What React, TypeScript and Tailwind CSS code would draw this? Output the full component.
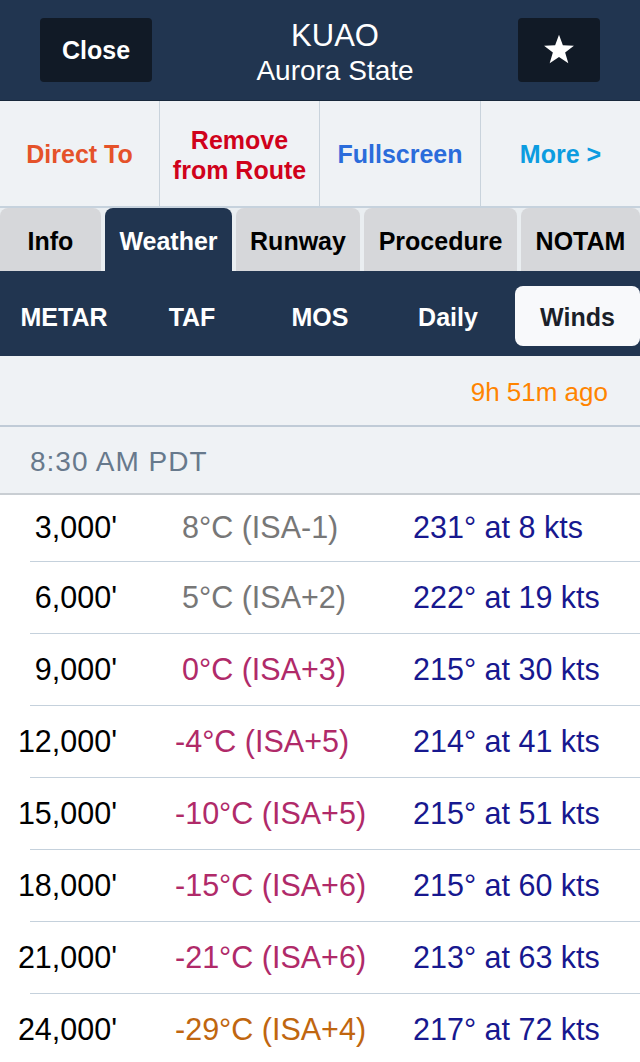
import React from "react";

type WindRow = {
  alt: string;
  temp: string;
  tone: "gray" | "magenta" | "orange";
  wind: string;
};

const rows: WindRow[] = [
  { alt: "3,000'", temp: "8°C (ISA-1)", tone: "gray", wind: "231° at 8 kts" },
  { alt: "6,000'", temp: "5°C (ISA+2)", tone: "gray", wind: "222° at 19 kts" },
  { alt: "9,000'", temp: "0°C (ISA+3)", tone: "magenta", wind: "215° at 30 kts" },
  { alt: "12,000'", temp: "-4°C (ISA+5)", tone: "magenta", wind: "214° at 41 kts" },
  { alt: "15,000'", temp: "-10°C (ISA+5)", tone: "magenta", wind: "215° at 51 kts" },
  { alt: "18,000'", temp: "-15°C (ISA+6)", tone: "magenta", wind: "215° at 60 kts" },
  { alt: "21,000'", temp: "-21°C (ISA+6)", tone: "magenta", wind: "213° at 63 kts" },
  { alt: "24,000'", temp: "-29°C (ISA+4)", tone: "orange", wind: "217° at 72 kts" },
];

const toneClass = {
  gray: "text-[#777777]",
  magenta: "text-[#b02a69]",
  orange: "text-[#c0660f]",
};

const tabs = [
  { label: "Info", w: "w-[101px]" },
  { label: "Weather", w: "w-[127px]", active: true },
  { label: "Runway", w: "w-[124px]" },
  { label: "Procedure", w: "w-[153px]" },
  { label: "NOTAM", w: "flex-1" },
];

const subTabs = ["METAR", "TAF", "MOS", "Daily", "Winds"];

const Star = () => (
  <svg width="32" height="31" viewBox="0 0 24 23" fill="white">
    <polygon points="12,0.5 14.9,8.3 23.2,8.6 16.6,13.8 19,21.9 12,17.2 5,21.9 7.4,13.8 0.8,8.6 9.1,8.3" />
  </svg>
);

// negative temps hang their minus sign left of the column
const Temp = ({ text }: { text: string }) =>
  text.startsWith("-") ? (
    <>
      <span className="-ml-[7px]">-</span>
      {text.slice(1)}
    </>
  ) : (
    <>{text}</>
  );

export default function App() {
  return (
    <div className="w-[640px] h-[1062px] overflow-hidden bg-white font-['Liberation_Sans',Arial,sans-serif]">
      {/* Header */}
      <div className="h-[101px] bg-[#213550] border-b border-[#18283b] flex items-center justify-between px-[40px] pb-[1px]">
        <button className="w-[112px] h-[64px] rounded-[4px] bg-[#111a26] text-white text-[25px] font-bold pt-[3px]">
          Close
        </button>
        <div className="flex flex-col items-center text-white leading-none pt-[7px]">
          <span className="text-[31px] mt-[-2px]">KUAO</span>
          <span className="text-[28px] mt-[6px]">Aurora State</span>
        </div>
        <button className="w-[82px] h-[64px] rounded-[4px] bg-[#111a26] flex items-center justify-center">
          <Star />
        </button>
      </div>

      {/* Actions */}
      <div className="h-[107px] bg-[#eff2f5] grid grid-cols-[160px_160px_161px_1fr] border-b-[2px] border-[#c6d2dd] text-[25px] font-bold leading-[30px] text-center">
        <div className="flex items-center justify-center text-[#e5522a] border-r border-[#c9d3dc] pt-[1px]">
          Direct To
        </div>
        <div className="flex items-center justify-center text-[#d0021b] border-r border-[#c9d3dc] pt-[2px]">
          Remove
          <br />
          from Route
        </div>
        <div className="flex items-center justify-center text-[#2b6cdb] border-r border-[#c9d3dc] pt-[1px]">
          Fullscreen
        </div>
        <div className="flex items-center justify-center text-[#0c9ce0] pt-[1px]">
          More &gt;
        </div>
      </div>

      {/* Tabs */}
      <div className="h-[63px] bg-[#eaeef1] flex gap-[4px] items-end">
        {tabs.map((t) => (
          <div
            key={t.label}
            className={`${t.w} h-[63px] rounded-t-[8px] flex items-center justify-center text-[25px] font-bold pt-[4px] ${
              t.active ? "bg-[#213550] text-white" : "bg-[#d6d7da] text-black"
            }`}
          >
            {t.label}
          </div>
        ))}
      </div>

      {/* Weather sub tabs */}
      <div className="h-[85px] bg-[#213550] grid grid-cols-5 items-start">
        {subTabs.map((s) =>
          s === "Winds" ? (
            <div key={s} className="ml-[3px] mt-[15px] h-[60px] rounded-[8px] bg-[#f8f9fb] flex items-center justify-center text-[25px] font-bold text-[#1b1f29] pt-[3px]">
              {s}
            </div>
          ) : (
            <div key={s} className="mt-[15px] h-[60px] flex items-center justify-center text-[25px] font-bold text-white pt-[3px]">
              {s}
            </div>
          )
        )}
      </div>

      {/* Age */}
      <div className="h-[71px] bg-[#eff2f5] border-b-[2px] border-[#c0cbd7] flex items-center justify-end pr-[32px] pt-[4px] text-[26px] text-[#ff8400]">
        9h 51m ago
      </div>

      {/* Forecast time */}
      <div className="h-[68px] bg-[#eff2f5] border-b-[2px] border-[#c9ced3] flex items-center pl-[30px] pt-[3px] text-[28px] tracking-[1px] text-[#67798c]">
        8:30 AM PDT
      </div>

      {/* Winds aloft */}
      <div className="flex flex-col">
        {rows.map((r, i) => (
          <div
            key={r.alt}
            className={`ml-[30px] border-b border-[#c5d1dc] flex items-center text-[30.5px] ${
              i === 0 ? "h-[67px]" : "h-[72px]"
            }`}
          >
            <span className="-ml-[30px] w-[117px] text-right text-black">{r.alt}</span>
            <span className={`ml-[65px] w-[231px] ${toneClass[r.tone]}`}>
              <Temp text={r.temp} />
            </span>
            <span className="text-[#17188f]">{r.wind}</span>
          </div>
        ))}
      </div>
    </div>
  );
}
